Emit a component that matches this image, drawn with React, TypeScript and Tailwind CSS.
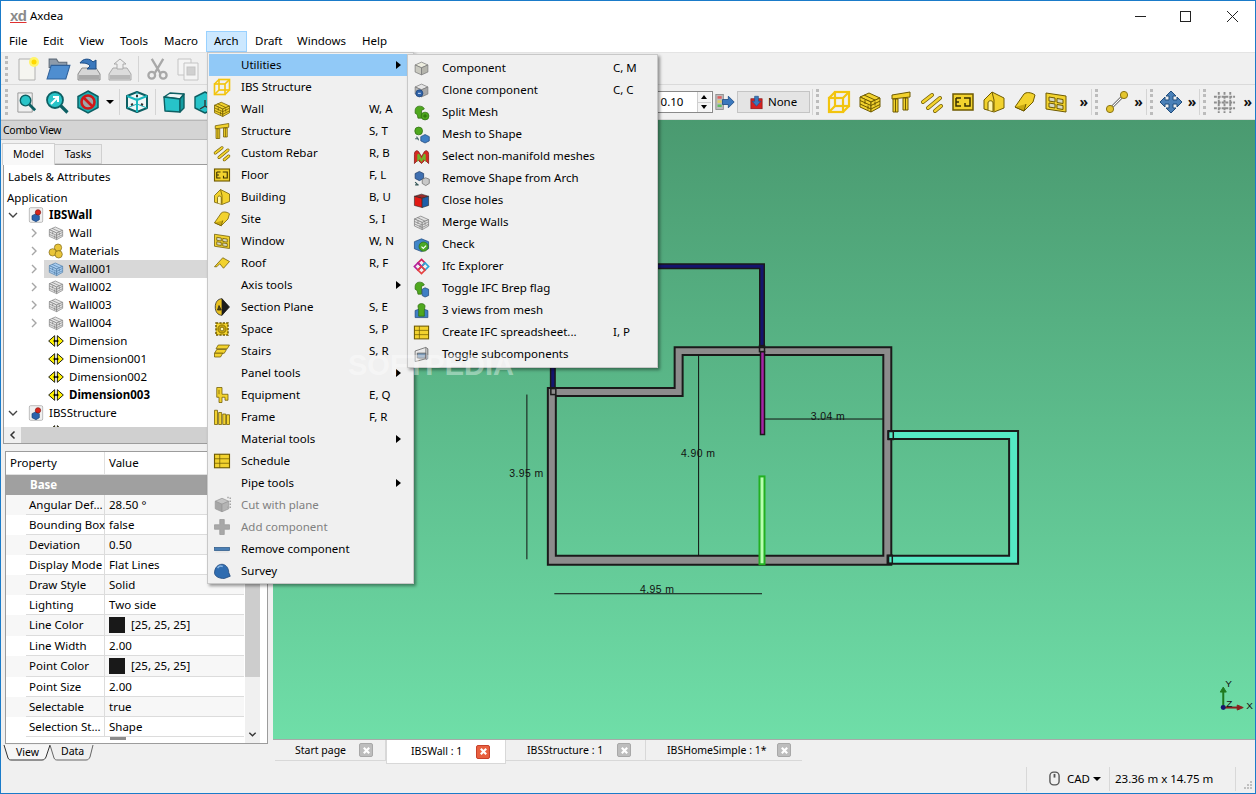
import type { ReactNode } from 'react';

const Y = '#f2d22e';
const YD = '#6e5a00';

const cube = (t: string, l: string, r: string, s = '#555') => (
  <g stroke={s} strokeWidth="1" strokeLinejoin="round">
    <path d="M3 7l9-4 9 4-9 4z" fill={t} />
    <path d="M3 7l9 4v10l-9-4z" fill={l} />
    <path d="M21 7l-9 4v10l9-4z" fill={r} />
  </g>
);

const wall = (c: string, line: string) => (
  <g stroke={line} strokeWidth="1" strokeLinejoin="round" fill={c}>
    <path d="M2 7l9-4 11 5-9 4z" />
    <path d="M2 7l11 5v10L2 17z" />
    <path d="M22 8l-9 4v10l9-5z" />
    <path d="M2 10.500l11 5 9-4.500M2 14l11 5 9-4.500M6 5l11 5M7 10v4M10 15.500v4M17 11.500v4" fill="none" />
  </g>
);

const greenBlob = (
  <path d="M3 9c0-4 3-6 6-6s6 1 7 4l-4 2v11H7l-1-5-3-2z" fill="#4fa81e" stroke="#2c6a10" />
);

const icons: Record<string, ReactNode> = {
  wire: (
    <g fill="none" stroke="#f2c40f" strokeWidth="2.200">
      <rect x="2" y="8" width="14" height="14" />
      <rect x="8" y="2" width="14" height="14" />
      <path d="M2 8l6-6M16 8l6-6M2 22l6-6M16 22l6-6" />
    </g>
  ),
  wall: wall(Y, YD),
  structure: (
    <g fill={Y} stroke={YD}>
      <path d="M3 5l18-3v5l-18 2z" />
      <path d="M4 9h5v13H4zM14 8h5v12h-5z" />
      <path d="M6.500 9v13M16.500 8v12" fill="none" />
    </g>
  ),
  rebar: (
    <g fill="none" strokeLinecap="round">
      <path d="M3 12L12 5M8 18L20 8M15 21l6-5" stroke={YD} strokeWidth="4" />
      <path d="M3 12L12 5M8 18L20 8M15 21l6-5" stroke={Y} strokeWidth="2.500" />
    </g>
  ),
  floor: (
    <g>
      <rect x="2" y="4" width="20" height="16" fill={Y} stroke={YD} strokeWidth="1.500" />
      <path d="M5 8h5M5 8v8h5M5 12h3M13 8h6v8h-5v-3" fill="none" stroke="#3a3000" strokeWidth="1.500" />
    </g>
  ),
  building: (
    <g stroke={YD} strokeLinejoin="round">
      <path d="M2 10l8-8 12 6v10l-10 4-10-3z" fill={Y} />
      <path d="M6 20v-7c0-3 5-3 5 0v8" fill="#fff6b0" />
      <path d="M12 21V10L10 2" fill="none" />
    </g>
  ),
  site: (
    <g stroke={YD} strokeLinejoin="round">
      <path d="M2 17L11 4c2-2 7-2 11 1l-2 7-9 9z" fill={Y} />
      <path d="M2 17l9 4 2-7" fill="#c9a810" />
    </g>
  ),
  window: (
    <g stroke={YD}>
      <path d="M2 3l20 3v16L2 19z" fill={Y} />
      <path d="M5 7l6 1v4l-6-1zM13 8.500l6 1v4l-6-1zM5 13l6 1v4l-6-1zM13 14.500l6 1v4l-6-1z" fill="#d8d8c0" />
    </g>
  ),
  roof: (
    <g stroke={YD} strokeLinejoin="round">
      <path d="M2 17L13 5l9 5-8 9-5-6-4 4z" fill={Y} />
    </g>
  ),
  section: (
    <g stroke="#222">
      <path d="M12 1l8 11-8 11C6 23 3 18 3 12S6 1 12 1z" fill="#e8c020" />
      <path d="M12 1l10 11-10 11z" fill="#1c1c1c" />
      <path d="M8 10l-2 6h5z" fill="#5a4a00" />
    </g>
  ),
  space: (
    <g stroke={YD}>
      <path d="M4 4h16v16H4z" fill={Y} strokeDasharray="3 1.500" strokeWidth="2" />
      <circle cx="12" cy="12" r="5.500" fill="#c9a810" />
      <circle cx="12" cy="12" r="2.500" fill="#fff6b0" />
    </g>
  ),
  stairs: (
    <g fill={Y} stroke={YD}>
      <path d="M7 4h15l-3 5H4z" />
      <path d="M5 10h13l-3 5H2z" />
      <path d="M2 15h11l-3 5H2z" />
    </g>
  ),
  equipment: (
    <g fill={Y} stroke={YD}>
      <path d="M5 2h7v9h8v8h-4v-4h-4v7H8v-7H5z" />
      <path d="M8 5v6" fill="none" />
    </g>
  ),
  frame: (
    <g fill={Y} stroke={YD}>
      <path d="M2 3h4v19H2zM7.500 6h4v16h-4zM13 8h4v14h-4zM18 9h4v13h-4z" />
    </g>
  ),
  schedule: (
    <g>
      <rect x="2" y="3" width="20" height="18" fill={Y} stroke={YD} strokeWidth="1.500" />
      <path d="M2 9h20M2 15h20M9 3v18" stroke={YD} fill="none" />
    </g>
  ),
  cut: (
    <g opacity="0.85">
      {cube('#bdbdbd', '#9a9a9a', '#aaaaaa', '#8a8a8a')}
      <path d="M19 2h4v13h-4" fill="none" stroke="#999" strokeWidth="2" strokeDasharray="2 2" />
    </g>
  ),
  add: <path d="M9 2h6v7h7v6h-7v7H9v-7H2V9h7z" fill="#a8a8a8" stroke="#999" />,
  remove: (
    <g>
      <rect x="2" y="10" width="20" height="4" fill="#4a7fb5" stroke="#2c5a88" />
      <rect x="3" y="15" width="18" height="2" fill="#e4e4e4" />
    </g>
  ),
  survey: (
    <g>
      <path d="M2 15C2 7 7 3 12 3c5 0 9 5 9 11l2 5-8 3C9 22 3 20 2 15z" fill="#2f6cb0" stroke="#1c4478" />
      <path d="M6 8c2-3 5-3 7-2" fill="none" stroke="#86b4e2" strokeWidth="2" />
    </g>
  ),
  component: cube('#ededdf', '#c9c9c0', '#b4b4ac', '#777'),
  clone: (
    <g>
      {cube('#e6e6e6', '#b8b8b8', '#a8a8a8', '#777')}
      <circle cx="9" cy="16" r="5" fill="#2f62a8" stroke="#1c4478" />
      <path d="M7 16h4" stroke="#cfe0f5" strokeWidth="1.500" />
    </g>
  ),
  split: (
    <g>
      {greenBlob}
      <circle cx="17" cy="17" r="5.500" fill="#4fa81e" stroke="#2c6a10" />
      <path d="M17 14v6M14 17h6" stroke="#205a08" />
    </g>
  ),
  meshShape: (
    <g>
      <circle cx="8" cy="7" r="5.500" fill="#4fa81e" stroke="#2c6a10" />
      <path d="M5 15l3 5M3 18h5" stroke="#466" fill="none" strokeWidth="1.500" />
      <path d="M11 15l6-3 6 3v6l-6 3-6-3z" fill="#3f7fc4" stroke="#1c4478" />
    </g>
  ),
  manifold: (
    <g>
      <path d="M2 22V9c0-6 5-7 7-2l3 5 3-5c2-5 7-4 7 2v13l-5-5-5 5-5-5z" fill="#d62a22" stroke="#7a0f0a" />
      <path d="M6 20V10c1-3 3-2 4 1l2 4 2-4c1-3 3-4 4-1v10l-3-4-3 4-3-4z" fill="#6fb52a" />
    </g>
  ),
  removeShape: (
    <g>
      <path d="M3 5l6-3 6 3v7l-6 3-6-3z" fill="#3f6fb0" stroke="#1c3a68" />
      <path d="M13 13l5-2 5 2v6l-5 3-5-3z" fill="#c8c8c8" stroke="#666" />
      <path d="M3 17l4 4M3 21h5" stroke="#355" fill="none" strokeWidth="1.500" />
    </g>
  ),
  holes: (
    <g stroke="#222" strokeWidth="0.800">
      <path d="M2 6l10-3 10 3-10 3z" fill="#9a2a2a" />
      <path d="M2 6l11 3v13L2 19z" fill="#e21a14" />
      <path d="M22 6l-9 3v13l9-3z" fill="#1d5ea8" />
    </g>
  ),
  merge: wall('#e2e2e2', '#7a7a7a'),
  check: (
    <g>
      <path d="M2 8l10-4 10 4v10l-10 4L2 18z" fill="#3f86c9" stroke="#1c4478" />
      <circle cx="15" cy="15" r="6.500" fill="#4aa928" stroke="#2c6a10" />
      <path d="M12 15l2.500 2.500 4-4" fill="none" stroke="#fff" strokeWidth="1.600" />
    </g>
  ),
  ifc: (
    <g fill="none" strokeWidth="2.400">
      <path d="M12 2l5 5-5 5-5-5z" stroke="#d0205a" />
      <path d="M17 7l5 5-5 5-5-5z" stroke="#2ba6d8" />
      <path d="M7 7l5 5-5 5-5-5z" stroke="#b6209a" />
      <path d="M12 12l5 5-5 5-5-5z" stroke="#e64040" />
    </g>
  ),
  brep: (
    <g>
      {greenBlob}
      <path d="M13 13l4-2 5 2v9l-5 2-4-2z" fill="#3f7fc4" stroke="#1c4478" />
    </g>
  ),
  views: (
    <g>
      <path d="M3 12l9-3 9 3v10H3z" fill="#3f7fc4" stroke="#1c4478" />
      <path d="M7 6c0-5 10-5 10 0l-1 6v8H8v-8z" fill="#4fa81e" stroke="#2c6a10" />
    </g>
  ),
  toggleSub: (
    <g stroke="#555">
      <path d="M3 7l15-5v16L3 22z" fill="#e8e8e8" />
      <path d="M18 2l3 2v14l-3 1" fill="#bdbdbd" />
      <path d="M6 10h12v7H6z" fill="#7c9ab8" />
    </g>
  ),
  doc: (
    <g>
      <rect x="2" y="1" width="20" height="22" rx="2" fill="#f0f0f0" stroke="#a0a0a0" />
      <path d="M6 13l6-3 5 3v6l-5 3-6-3z" fill="#2b63ad" stroke="#173f74" />
      <circle cx="15" cy="8" r="4" fill="#d8261c" stroke="#801410" />
    </g>
  ),
  mat: (
    <g fill="#e9c53a" stroke="#7a6414">
      <circle cx="15" cy="7" r="5.500" />
      <circle cx="7" cy="14" r="5.500" />
      <circle cx="16" cy="17" r="5.500" />
    </g>
  ),
  dim: (
    <g fill="#fff200" stroke="#000" strokeWidth="1.300" strokeLinejoin="round">
      <path d="M10 4v16L1 12z" />
      <path d="M14 4v16l9-8z" />
      <circle cx="10" cy="12" r="1.300" fill="#000" />
      <circle cx="14" cy="12" r="1.300" fill="#000" />
    </g>
  ),
  wallGray: wall('#e6e6e6', '#7c7c7c'),
  wallBlue: wall('#a9cdf0', '#4d7ca8'),
  newDoc: (
    <g>
      <path d="M3 2h16v21H3z" fill="#f5f5f0" stroke="#b0b0b0" />
      <circle cx="18" cy="5" r="5" fill="#fff56a" />
      <circle cx="18" cy="5" r="2.500" fill="#ffd800" />
    </g>
  ),
  open: (
    <g>
      <path d="M3 3h7l2 3h8v5H3z" fill="#8d9bab" stroke="#5d6a78" />
      <path d="M5 9h18l-4 13H1z" fill="#4f8ed0" stroke="#2f6099" />
    </g>
  ),
  save: (
    <g>
      <path d="M5 11h14l4 6v6H1v-6z" fill="#d6d6d6" stroke="#8c8c8c" />
      <rect x="2" y="18" width="20" height="4" fill="#a8a8a8" />
      <path d="M3 6c3-5 10-5 13-1l3-2v9h-9l3-3c-2-3-6-3-10-3z" fill="#3a78bd" stroke="#1d4d85" />
    </g>
  ),
  saveAs: (
    <g>
      <path d="M5 11h14l4 6v6H1v-6z" fill="#dcdcdc" stroke="#aaa" />
      <rect x="2" y="18" width="20" height="4" fill="#b8b8b8" />
      <path d="M9 12V7H6l6-5 6 5h-3v5z" fill="#eee" stroke="#aaa" />
    </g>
  ),
  scissors: (
    <g fill="none" stroke="#a8a8a8" strokeWidth="2.400">
      <path d="M6 2l9 15M18 2L9 17" />
      <circle cx="6" cy="19" r="3.500" />
      <circle cx="18" cy="19" r="3.500" />
    </g>
  ),
  copy: (
    <g stroke="#c4c4c4" fill="#f4f4f4">
      <path d="M2 2h13v16H2z" />
      <path d="M8 6h14v17H8z" />
      <rect x="11" y="10" width="8" height="8" fill="#d0d0d0" />
    </g>
  ),
  fit: (
    <g>
      <path d="M3 2h15v20H3z" fill="#efefef" stroke="#999" />
      <circle cx="11" cy="10" r="5.500" fill="#29c4c8" stroke="#0d5f63" strokeWidth="1.500" />
      <path d="M15 14l6 6" stroke="#0d5f63" strokeWidth="3" />
    </g>
  ),
  zoomSel: (
    <g>
      <circle cx="10" cy="10" r="8" fill="#29c4c8" stroke="#0d5f63" strokeWidth="1.800" />
      <path d="M15.500 15.500l7 7" stroke="#0d5f63" strokeWidth="3.200" />
      <path d="M6 14l6-6M8 7h5v5" fill="none" stroke="#fff" strokeWidth="2" />
    </g>
  ),
  noSign: (
    <g>
      <path d="M12 1l10 5.500v11L12 23 2 17.500v-11z" fill="#1cb0b4" stroke="#0d5f63" strokeWidth="1.500" />
      <circle cx="12" cy="12" r="6.500" fill="#9fa6a8" stroke="#d01818" strokeWidth="2.600" />
      <path d="M7.500 7.500l9 9" stroke="#d01818" strokeWidth="2.600" />
    </g>
  ),
  wireTeal: (
    <g fill="none" strokeWidth="2" strokeLinejoin="round">
      <path d="M2 6l10-4 10 4v12l-10 4-10-4z" fill="#f2f6f6" stroke="#0d5f63" />
      <path d="M2 6l10 4 10-4M12 10v12" stroke="#19b7bd" />
      <path d="M2 18l10-4 10 4M12 2v12" stroke="#19b7bd" strokeWidth="1" />
      <path d="M6 15l2-1M18 15l-2-1M12 5v2" stroke="#333" />
    </g>
  ),
  cubeTeal: (
    <g stroke="#0d5f63" strokeWidth="1.400" strokeLinejoin="round">
      <path d="M2 7l6-4 14 1-4 5z" fill="#eef6f6" />
      <path d="M2 7l16 2v13L3 21z" fill="#27c3c9" />
      <path d="M22 4v14l-4 4V9z" fill="#149ca1" />
    </g>
  ),
  cubeTeal2: (
    <g stroke="#0d5f63" strokeWidth="1.400" strokeLinejoin="round">
      <path d="M2 7l10-5 10 5v11l-10 5-10-5z" fill="#27c3c9" />
      <path d="M12 16l-5 3M12 16v-6M12 16l5 3" stroke="#333" fill="none" />
    </g>
  ),
  swap: (
    <g>
      <rect x="1" y="3" width="9" height="18" fill="#bdbdbd" stroke="#888" />
      <rect x="3" y="5" width="5" height="3" fill="#e06060" />
      <rect x="3" y="10" width="5" height="3" fill="#e0d060" />
      <rect x="3" y="15" width="5" height="3" fill="#60c060" />
      <path d="M9 9h7V5l7 7-7 7v-4H9z" fill="#3a78bd" stroke="#1d4d85" />
    </g>
  ),
  none: (
    <g>
      <rect x="3" y="6" width="18" height="16" fill="#d62020" stroke="#7c1010" />
      <path d="M9 2h6v8h4l-7 8-7-8h4z" fill="#3a78bd" stroke="#1d4d85" />
    </g>
  ),
  line: (
    <g>
      <path d="M5 19L19 5" stroke="#888" strokeWidth="3" />
      <path d="M5 19L19 5" stroke="#fff" strokeWidth="1" />
      <circle cx="19" cy="5" r="3.600" fill="#e4c52e" stroke="#8a7414" />
      <circle cx="5" cy="19" r="3.600" fill="#e4c52e" stroke="#8a7414" />
    </g>
  ),
  move: (
    <path
      d="M12 1l5 5h-3v4h4V7l5 5-5 5v-3h-4v4h3l-5 5-5-5h3v-4H6v3l-5-5 5-5v3h4V6H7z"
      fill="#4a80b8"
      stroke="#1f4c7c"
    />
  ),
  grid: (
    <path
      d="M6 1v22M12 1v22M18 1v22M1 6h22M1 12h22M1 18h22"
      stroke="#8e8e8e"
      strokeWidth="2"
      fill="none"
      strokeDasharray="3 1"
    />
  ),
};

function Icon({ name, size = 16 }: { name: string; size?: number }) {
  return (
    <svg viewBox="0 0 24 24" width={size} height={size} className="shrink-0 overflow-visible">
      {icons[name]}
    </svg>
  );
}

function Grip() {
  return <div className="h-[26px] w-[3px] shrink-0 border-l-[3px] border-dotted border-[#bcbcbc]" />;
}

function Sep() {
  return <div className="h-[26px] w-px shrink-0 bg-[#d4d4d4]" />;
}

function More() {
  return <span className="w-[9px] shrink-0 text-[14px] leading-none font-bold text-[#111]">»</span>;
}

function Arrow() {
  return <span className="block h-0 w-0 border-y-[4px] border-l-[5px] border-y-transparent border-l-black" />;
}

const archItems = [
  { label: 'Utilities', sub: true, active: true },
  { label: 'IBS Structure', icon: 'wire' },
  { label: 'Wall', icon: 'wall', keys: 'W, A' },
  { label: 'Structure', icon: 'structure', keys: 'S, T' },
  { label: 'Custom Rebar', icon: 'rebar', keys: 'R, B' },
  { label: 'Floor', icon: 'floor', keys: 'F, L' },
  { label: 'Building', icon: 'building', keys: 'B, U' },
  { label: 'Site', icon: 'site', keys: 'S, I' },
  { label: 'Window', icon: 'window', keys: 'W, N' },
  { label: 'Roof', icon: 'roof', keys: 'R, F' },
  { label: 'Axis tools', sub: true },
  { label: 'Section Plane', icon: 'section', keys: 'S, E' },
  { label: 'Space', icon: 'space', keys: 'S, P' },
  { label: 'Stairs', icon: 'stairs', keys: 'S, R' },
  { label: 'Panel tools', sub: true },
  { label: 'Equipment', icon: 'equipment', keys: 'E, Q' },
  { label: 'Frame', icon: 'frame', keys: 'F, R' },
  { label: 'Material tools', sub: true },
  { label: 'Schedule', icon: 'schedule' },
  { label: 'Pipe tools', sub: true },
  { label: 'Cut with plane', icon: 'cut', disabled: true },
  { label: 'Add component', icon: 'add', disabled: true },
  { label: 'Remove component', icon: 'remove' },
  { label: 'Survey', icon: 'survey' },
];

const utilityItems = [
  { label: 'Component', icon: 'component', keys: 'C, M' },
  { label: 'Clone component', icon: 'clone', keys: 'C, C' },
  { label: 'Split Mesh', icon: 'split' },
  { label: 'Mesh to Shape', icon: 'meshShape' },
  { label: 'Select non-manifold meshes', icon: 'manifold' },
  { label: 'Remove Shape from Arch', icon: 'removeShape' },
  { label: 'Close holes', icon: 'holes' },
  { label: 'Merge Walls', icon: 'merge' },
  { label: 'Check', icon: 'check' },
  { label: 'Ifc Explorer', icon: 'ifc' },
  { label: 'Toggle IFC Brep flag', icon: 'brep' },
  { label: '3 views from mesh', icon: 'views' },
  { label: 'Create IFC spreadsheet...', icon: 'schedule', keys: 'I, P' },
  { label: 'Toggle subcomponents', icon: 'toggleSub' },
];

const treeRows = [
  { label: 'IBSWall', icon: 'doc', level: 1, open: true, bold: true },
  { label: 'Wall', icon: 'wallGray', level: 2, closed: true },
  { label: 'Materials', icon: 'mat', level: 2, closed: true },
  { label: 'Wall001', icon: 'wallBlue', level: 2, closed: true, selected: true },
  { label: 'Wall002', icon: 'wallGray', level: 2, closed: true },
  { label: 'Wall003', icon: 'wallGray', level: 2, closed: true },
  { label: 'Wall004', icon: 'wallGray', level: 2, closed: true },
  { label: 'Dimension', icon: 'dim', level: 2 },
  { label: 'Dimension001', icon: 'dim', level: 2 },
  { label: 'Dimension002', icon: 'dim', level: 2 },
  { label: 'Dimension003', icon: 'dim', level: 2, bold: true },
  { label: 'IBSStructure', icon: 'doc', level: 1, open: true },
  { label: '', icon: 'dim', level: 2 },
];

const props = [
  { name: 'Angular Def...', value: '28.50 °', h: 'h-[20px]' },
  { name: 'Bounding Box', value: 'false', h: 'h-[20px]' },
  { name: 'Deviation', value: '0.50', h: 'h-[20px]' },
  { name: 'Display Mode', value: 'Flat Lines', h: 'h-[20px]' },
  { name: 'Draw Style', value: 'Solid', h: 'h-[20px]' },
  { name: 'Lighting', value: 'Two side', h: 'h-[20px]' },
  { name: 'Line Color', value: '[25, 25, 25]', swatch: true, h: 'h-[21px]' },
  { name: 'Line Width', value: '2.00', h: 'h-[20px]' },
  { name: 'Point Color', value: '[25, 25, 25]', swatch: true, h: 'h-[21px]' },
  { name: 'Point Size', value: '2.00', h: 'h-[20px]' },
  { name: 'Selectable', value: 'true', h: 'h-[20px]' },
  { name: 'Selection St...', value: 'Shape', h: 'h-[20px]' },
];

const docTabs = [
  { label: 'Start page', w: 'w-[111px]', pl: 'pl-[20px]', pr: 'pr-[12px]' },
  { label: 'IBSWall : 1', w: 'w-[120px]', pl: 'pl-[24px]', pr: 'pr-[15px]', active: true },
  { label: 'IBSStructure : 1', w: 'w-[140px]', pl: 'pl-[21px]', pr: 'pr-[14px]' },
  { label: 'IBSHomeSimple : 1*', w: 'w-[156px]', pl: 'pl-[21px]', pr: 'pr-[11px]' },
];

function CloseBox({ active }: { active?: boolean }) {
  return (
    <span
      className={`flex h-[14px] w-[14px] items-center justify-center rounded-[2px] border ${
        active ? 'border-[#c8402a] bg-[#e8603f]' : 'border-[#a8a8a8] bg-[#bdbdbd]'
      }`}
    >
      <svg viewBox="0 0 10 10" width="9" height="9">
        <path d="M2 2l6 6M8 2l-6 6" stroke="#fff" strokeWidth="2.400" />
      </svg>
    </span>
  );
}

function FloorPlan() {
  const line = '#1a1a1a';
  return (
    <svg viewBox="273 120 982 620" className="h-full w-full" style={{ fontFamily: '"Liberation Sans", sans-serif' }}>
      <path d="M657 266.500H762V347" fill="none" stroke={line} strokeWidth="6" />
      <path d="M657 266.500H762V347" fill="none" stroke="#14146e" strokeWidth="3" />
      <path d="M552.500 366V390" fill="none" stroke={line} strokeWidth="6" />
      <path d="M552.500 366V390" fill="none" stroke="#14146e" strokeWidth="3" />
      <path
        fillRule="evenodd"
        d="M547.500 388.500H674.500V347.500H891.500V565.500H547.500ZM555.500 396.500V556.500H883.500V355.500H682.500V396.500Z"
        fill="#8c8c8c"
        stroke={line}
        strokeWidth="2"
      />
      <path
        fillRule="evenodd"
        d="M888.500 431.500H1018.500V564.500H888.500V556.500H1009.500V439.500H888.500Z"
        fill="#55e8c4"
        stroke={line}
        strokeWidth="2"
      />
      <path d="M760.500 352H764.500V407H765V407H764.500V435H760.500Z" fill="#a626a6" stroke={line} strokeWidth="1.500" />
      <rect x="759.500" y="477" width="5" height="88" fill="#b8ffb0" stroke="#22b022" strokeWidth="2" />
      <rect x="759.500" y="346" width="5" height="6" fill="none" stroke={line} strokeWidth="1.500" />
      <rect x="550.500" y="389" width="5" height="6" fill="none" stroke={line} strokeWidth="1.500" />
      <rect x="888.500" y="432" width="5" height="8" fill="none" stroke={line} strokeWidth="1.500" />
      <rect x="887.500" y="556" width="5" height="8" fill="none" stroke={line} strokeWidth="1.500" />
      <path d="M526.500 395V560M698.500 356V556M765 419.500H883M554 594.500H762" stroke="#111" strokeWidth="1" fill="none" />
      <g fill="#111" fontSize="10.500" textAnchor="middle" letterSpacing="0.400">
        <text x="526" y="478">3.95 m</text>
        <text x="698" y="458">4.90 m</text>
        <text x="828" y="420">3.04 m</text>
        <text x="657" y="594">4.95 m</text>
      </g>
      <g strokeWidth="2">
        <path d="M1224 708V691" stroke="#1f7a1f" />
        <path d="M1221 693l3-5 3 5z" fill="#1f7a1f" stroke="#1f7a1f" strokeWidth="1" />
        <path d="M1224 708.500H1240" stroke="#8a1f1f" />
        <path d="M1238 706l6 2.500-6 2.500z" fill="#8a1f1f" stroke="#8a1f1f" strokeWidth="1" />
        <circle cx="1224" cy="708.500" r="2.500" fill="#16166e" stroke="none" />
      </g>
      <g fill="#111" fontSize="10">
        <text x="1226" y="688">Y</text>
        <text x="1247" y="710">X</text>
        <text x="1227" y="708">Z</text>
      </g>
    </svg>
  );
}

export default function App() {
  return (
    <div
      className="relative flex h-[794px] w-[1256px] flex-col overflow-hidden border border-[#1a7bc9] bg-[#f0f0f0] text-[11.500px] leading-none text-black"
      style={{ fontFamily: '"Noto Sans", sans-serif' }}
    >
      {/* title bar */}
      <div className="flex h-[29px] shrink-0 items-center bg-white">
        <span
          className="ml-[9px] w-[20px] text-[15px] leading-[15px] font-bold tracking-[-0.5px] text-[#8a8a8a] underline decoration-[#e03030]"
          style={{ fontFamily: '"Liberation Sans", sans-serif' }}
        >
          xd
        </span>
        <span>Axdea</span>
        <div className="ml-auto flex h-full items-center">
          <svg viewBox="0 0 46 29" width="46" height="29">
            <path d="M18 15.500h11" stroke="#222" />
          </svg>
          <svg viewBox="0 0 46 29" width="46" height="29">
            <rect x="17.500" y="10.500" width="10" height="10" fill="none" stroke="#222" />
          </svg>
          <svg viewBox="0 0 46 29" width="46" height="29">
            <path d="M18 10l11 11M29 10L18 21" stroke="#222" />
          </svg>
        </div>
      </div>

      {/* menu bar */}
      <div className="flex h-[22px] shrink-0 items-center bg-white">
        {['File', 'Edit', 'View', 'Tools', 'Macro'].map((m, i) => (
          <span key={m} className={`${['w-[34px]', 'w-[36px]', 'w-[41px]', 'w-[44px]', 'w-[50px]'][i]} pl-[8px]`}>
            {m}
          </span>
        ))}
        <span className="flex h-[21px] w-[41px] items-center border border-[#99d1ff] bg-[#cce8ff] pl-[7px]">Arch</span>
        {['Draft', 'Windows', 'Help'].map((m, i) => (
          <span key={m} className={`${['w-[42px]', 'w-[65px]', 'w-[40px]'][i]} pl-[8px]`}>
            {m}
          </span>
        ))}
      </div>

      {/* toolbars */}
      <div className="flex h-[33px] shrink-0 items-center border-t border-b border-t-[#e4e4e4] border-b-[#dadada] pl-[4px]">
        <Grip />
        <span className="ml-[8px]"><Icon name="newDoc" size={24} /></span>
        <span className="ml-[6px]"><Icon name="open" size={25} /></span>
        <span className="ml-[6px]"><Icon name="save" size={24} /></span>
        <span className="ml-[7px]"><Icon name="saveAs" size={24} /></span>
        <span className="ml-[6px]"><Sep /></span>
        <span className="ml-[7px]"><Icon name="scissors" size={23} /></span>
        <span className="ml-[7px]"><Icon name="copy" size={24} /></span>
      </div>
      <div className="flex h-[35px] shrink-0 items-center border-b border-[#dadada] pl-[4px]">
        <Grip />
        <span className="ml-[7px]"><Icon name="fit" size={23} /></span>
        <span className="ml-[7px]"><Icon name="zoomSel" size={24} /></span>
        <span className="ml-[7px]"><Icon name="noSign" size={24} /></span>
        <span className="ml-[6px] h-0 w-0 border-x-[4px] border-t-[4px] border-x-transparent border-t-black" />
        <span className="ml-[5px]"><Sep /></span>
        <span className="ml-[5px]"><Icon name="wireTeal" size={24} /></span>
        <span className="ml-[6px]"><Sep /></span>
        <span className="ml-[6px]"><Icon name="cubeTeal" size={24} /></span>
        <span className="ml-[7px]"><Icon name="cubeTeal2" size={24} /></span>

        <div className="ml-auto flex h-full items-center">
          <div className="flex h-[22px] w-[57px] items-center border border-[#8a8a8a] bg-white">
            <span className="ml-[4px] w-[36px]">0.10</span>
            <div className="flex h-full w-[14px] flex-col border-l border-[#cfcfcf]">
              <span className="flex flex-1 items-center justify-center border-b border-[#cfcfcf] bg-[#f4f4f4]">
                <span className="h-0 w-0 border-x-[3px] border-b-[4px] border-x-transparent border-b-black" />
              </span>
              <span className="flex flex-1 items-center justify-center bg-[#f4f4f4]">
                <span className="h-0 w-0 border-x-[3px] border-t-[4px] border-x-transparent border-t-black" />
              </span>
            </div>
          </div>
          <span className="ml-[2px]"><Icon name="swap" size={20} /></span>
          <div className="ml-[2px] flex h-[22px] w-[73px] items-center justify-center gap-[4px] border border-[#c4c4c4] bg-[#e4e4e4]">
            <Icon name="none" size={15} />
            <span>None</span>
          </div>
          <span className="ml-[2px]"><Sep /></span>
          <span className="ml-[3px]"><Grip /></span>
          <div className="ml-[8px] flex w-[250px] shrink-0 justify-between pr-[9px]">
            {['wire', 'wall', 'structure', 'rebar', 'floor', 'building', 'site', 'window'].map((n) => (
              <Icon key={n} name={n} size={24} />
            ))}
          </div>
          <span className="ml-[3px]"><More /></span>
          <span className="ml-[3px]"><Sep /></span>
          <span className="ml-[3px]"><Grip /></span>
          <span className="ml-[7px]"><Icon name="line" size={24} /></span>
          <span className="ml-[5px]"><More /></span>
          <span className="ml-[3px]"><Sep /></span>
          <span className="ml-[3px]"><Grip /></span>
          <span className="ml-[6px]"><Icon name="move" size={24} /></span>
          <span className="ml-[5px]"><More /></span>
          <span className="ml-[3px]"><Sep /></span>
          <span className="ml-[3px]"><Grip /></span>
          <span className="ml-[7px]"><Icon name="grid" size={23} /></span>
          <span className="mr-[3px] ml-[7px]"><More /></span>
        </div>
      </div>

      <div className="flex h-[644px] shrink-0">
        {/* left dock */}
        <div className="flex w-[272px] shrink-0 flex-col">
          <div className="flex h-[20px] shrink-0 items-center border-y border-[#b8b8b8] bg-[#d4d4d4] pl-[2px] text-[10.500px] tracking-[-0.3px]">
            Combo View
          </div>
          <div className="mr-[5px] flex h-[24px] shrink-0 items-end pt-[2px] pl-[1px] text-[10.500px]">
            <span className="z-10 -mb-px flex h-[22px] w-[53px] items-center justify-center border border-b-0 border-[#d0d0d0] bg-[#f8f8f8]">
              Model
            </span>
            <span className="flex h-[20px] w-[47px] items-center justify-center border border-l-0 border-[#d0d0d0] bg-[#ececec]">
              Tasks
            </span>
          </div>
          <div className="mr-[5px] ml-[2px] h-[280px] shrink-0 overflow-hidden border border-[#9c9c9c] bg-white">
            <div className="h-[262px] overflow-hidden">
              <div className="flex h-[24px] items-center pl-[4px]">Labels &amp; Attributes</div>
              <div className="flex h-[17px] items-center pl-[3px]">Application</div>
              {treeRows.map((r, i) => (
                <div key={i} className="flex h-[18px] items-center">
                  <span className={r.level === 1 ? 'w-[4px] shrink-0' : 'w-[24px] shrink-0'} />
                  <span className="flex w-[16px] shrink-0 items-center">
                    {r.open && (
                      <svg viewBox="0 0 10 10" width="10" height="10">
                        <path d="M1 3l4 4 4-4" fill="none" stroke="#444" strokeWidth="1.400" />
                      </svg>
                    )}
                    {r.closed && (
                      <svg viewBox="0 0 10 10" width="10" height="10" className="ml-px">
                        <path d="M3 1l4 4-4 4" fill="none" stroke="#a6a6a6" strokeWidth="1.400" />
                      </svg>
                    )}
                  </span>
                  <span className={`flex h-full flex-1 items-center pl-[4px] ${r.selected ? 'bg-[#d8d8d8]' : ''}`}>
                    <Icon name={r.icon} size={16} />
                    <span className={`ml-[5px] ${r.bold ? 'font-bold' : ''}`}>{r.label}</span>
                  </span>
                </div>
              ))}
            </div>
            <div className="flex h-[16px] bg-[#d0d0d0]">
              <span className="flex w-[17px] items-center justify-center bg-[#f0f0f0]">
                <svg viewBox="0 0 10 10" width="10" height="10">
                  <path d="M6.500 1.500l-3.500 3.500 3.500 3.500" fill="none" stroke="#333" strokeWidth="1.500" />
                </svg>
              </span>
            </div>
          </div>

          <div className="mt-[7px] mr-[5px] ml-[4px] flex h-[293px] shrink-0 border border-[#9c9c9c] bg-white">
            <div className="flex w-[238px] shrink-0 flex-col overflow-hidden">
              <div className="flex h-[23px] shrink-0 items-center border-b border-[#e0e0e0]">
                <span className="w-[99px] border-r border-[#e0e0e0] pl-[4px] leading-[22px]">Property</span>
                <span className="pl-[4px]">Value</span>
              </div>
              <div className="flex h-[20px] shrink-0 items-center bg-[#a0a0a0] pl-[24px] font-bold text-white">Base</div>
              {props.map((p, i) => (
                <div key={p.name} className={`flex ${p.h} shrink-0 ${i % 2 === 0 ? 'bg-[#f7f7f7]' : 'bg-white'}`}>
                  <span className="w-[20px] shrink-0" />
                  <span className="flex w-[79px] shrink-0 items-center border-r border-b border-[#dcdcdc] pl-[3px] whitespace-nowrap">
                    {p.name}
                  </span>
                  <span className="flex flex-1 items-center border-b border-[#dcdcdc] pl-[4px]">
                    {p.swatch && <span className="mr-[6px] h-[16px] w-[16px] bg-[#191919]" />}
                    {p.value}
                  </span>
                </div>
              ))}
              <div className="flex h-[6px] shrink-0">
                <span className="ml-[104px] h-[3px] w-[16px] bg-[#8c8c8c]" />
              </div>
            </div>
            <div className="ml-[1px] flex w-[15px] shrink-0 flex-col bg-[#f0f0f0]">
              <div className="h-[225px] shrink-0 bg-[#cdcdcd]" />
              <div className="mt-auto flex h-[17px] items-center justify-center">
                <svg viewBox="0 0 10 10" width="9" height="9">
                  <path d="M1.500 3l3.500 3.500 3.500-3.500" fill="none" stroke="#333" strokeWidth="1.500" />
                </svg>
              </div>
            </div>
          </div>

          <div className="flex h-[17px] shrink-0 text-[10.500px]">
            <svg viewBox="0 0 96 17" width="96" height="17" className="ml-[2px]">
              <path d="M1 1l4 13c1 2 2 2 4 2h30c2 0 3-1 4-3l4-12" fill="#f6f6f6" stroke="#333" />
              <path d="M47 1l4 13c1 2 2 2 4 2h28c2 0 3-1 4-3l3-12" fill="#f0f0f0" stroke="#666" />
            </svg>
            <span className="absolute mt-[3px] ml-[15px]">View</span>
            <span className="absolute mt-[2px] ml-[60px]">Data</span>
          </div>
        </div>

        {/* viewport + document tabs */}
        <div className="flex min-w-0 flex-1 flex-col">
          <div className="h-[620px] shrink-0 border-b border-[#a8a8a8] bg-[linear-gradient(to_bottom,#4a9a70,#6fdea8)]">
            <FloorPlan />
          </div>
          <div className="flex h-[21px] items-start pl-[2px] text-[10.500px]">
            {docTabs.map((t) => (
              <div
                key={t.label}
                className={`flex ${t.w} ${t.pl} ${t.pr} shrink-0 items-center border-b border-[#d8d8d8] ${
                  t.active ? 'h-[24px] border-x bg-white' : 'h-[21px] border-r last:border-r-0'
                }`}
              >
                <span className="whitespace-nowrap">{t.label}</span>
                <span className="ml-auto">
                  <CloseBox active={t.active} />
                </span>
              </div>
            ))}
          </div>
        </div>
      </div>

      {/* status bar */}
      <div className="flex min-h-0 flex-1 items-center">
        <div className="ml-auto flex h-[24px] items-center">
          <span className="h-full w-px bg-[#d8d8d8]" />
          <svg viewBox="0 0 12 16" width="11" height="15" className="ml-[22px]">
            <rect x="1" y="1" width="10" height="14" rx="4" fill="none" stroke="#555" strokeWidth="1.500" />
            <path d="M6 3v4" stroke="#555" strokeWidth="2" />
          </svg>
          <span className="ml-[7px]">CAD</span>
          <span className="ml-[3px] h-0 w-0 border-x-[4px] border-t-[4px] border-x-transparent border-t-black" />
          <span className="ml-[8px] h-full w-px bg-[#d8d8d8]" />
          <span className="ml-[5px] w-[120px] whitespace-nowrap">23.36 m x 14.75 m</span>
          <span className="h-full w-px bg-[#d8d8d8]" />
          <svg viewBox="0 0 10 10" width="10" height="10" className="mt-[12px] mr-[2px] ml-[7px]">
            <path d="M7 1h2v2H7zM4 4h2v2H4zM7 4h2v2H7zM1 7h2v2H1zM4 7h2v2H4zM7 7h2v2H7z" fill="#c0c0c0" />
          </svg>
        </div>
      </div>

      {/* Arch menu */}
      <div className="absolute top-[51px] left-[206px] z-20 w-[207px] border border-[#c8c8c8] bg-[#f0f0f0] py-px pl-px shadow-[2px_2px_3px_rgba(0,0,0,0.4)]">
        {archItems.map((m) => (
          <div
            key={m.label}
            className={`flex h-[22px] items-center ${m.active ? 'bg-[#91c9f7]' : ''} ${m.disabled ? 'text-[#808080]' : ''}`}
          >
            <span className="flex w-[32px] shrink-0 justify-center pr-[6px]">
              {m.icon && <Icon name={m.icon} size={18} />}
            </span>
            <span className="w-[128px] shrink-0">{m.label}</span>
            <span className="w-[27px] shrink-0">{m.keys}</span>
            {m.sub && <Arrow />}
          </div>
        ))}
      </div>

      {/* Utilities submenu */}
      <div className="absolute top-[53px] left-[406px] z-30 w-[251px] border border-[#c8c8c8] bg-[#f0f0f0] py-[2px] pl-px shadow-[2px_2px_3px_rgba(0,0,0,0.4)]">
        {utilityItems.map((m) => (
          <div key={m.label} className="flex h-[22px] items-center">
            <span className="flex w-[33px] shrink-0 justify-center pr-[8px]">
              <Icon name={m.icon} size={17} />
            </span>
            <span className="w-[171px] shrink-0">{m.label}</span>
            <span>{m.keys}</span>
          </div>
        ))}
      </div>

      <span
        className="absolute top-[350px] left-[347px] z-40 text-[29px] leading-[29px] font-bold text-white/40"
        style={{ fontFamily: '"Liberation Sans", sans-serif' }}
      >
        SOFTPEDIA
      </span>
    </div>
  );
}
